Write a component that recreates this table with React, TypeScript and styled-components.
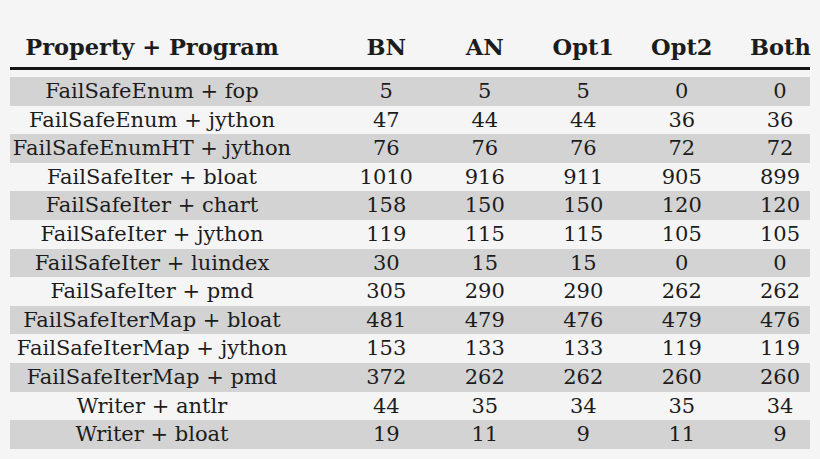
import React from "react";
import styled, { createGlobalStyle } from "styled-components";

const GlobalStyle = createGlobalStyle`
  html, body { margin: 0; padding: 0; background: #f5f5f5; }
  body { font-family: "DejaVu Serif", serif; color: #1c1c1c; }
`;

const Table = styled.div`
  width: 800px;
  margin: 0 10px;
  padding-top: 33px;
`;

const Row = styled.div<{ $shaded?: boolean; $header?: boolean }>`
  display: flex;
  height: ${(p) => (p.$header ? "29px" : "28.6px")};
  line-height: ${(p) => (p.$header ? "29px" : "28.6px")};
  font-size: ${(p) => (p.$header ? "22.5px" : "21px")};
  font-weight: ${(p) => (p.$header ? 700 : 400)};
  background: ${(p) => (p.$shaded ? "#d3d3d3" : "transparent")};
  white-space: nowrap;
`;

const Cell = styled.div<{ $kind: "label" | "num" | "last" }>`
  text-align: center;
  box-sizing: border-box;
  width: ${(p) => (p.$kind === "label" ? "327px" : p.$kind === "last" ? "79px" : "98.5px")};
  padding-right: ${(p) => (p.$kind === "label" ? "43px" : "0")};
  padding-left: ${(p) => (p.$kind === "last" ? "19px" : "0")};
`;

const Rule = styled.div`
  height: 3px;
  background: #151515;
  margin: 5px 0 7px;
`;

const headers = ["Property + Program", "BN", "AN", "Opt1", "Opt2", "Both"];

const data: [string, number, number, number, number, number][] = [
  ["FailSafeEnum + fop", 5, 5, 5, 0, 0],
  ["FailSafeEnum + jython", 47, 44, 44, 36, 36],
  ["FailSafeEnumHT + jython", 76, 76, 76, 72, 72],
  ["FailSafeIter + bloat", 1010, 916, 911, 905, 899],
  ["FailSafeIter + chart", 158, 150, 150, 120, 120],
  ["FailSafeIter + jython", 119, 115, 115, 105, 105],
  ["FailSafeIter + luindex", 30, 15, 15, 0, 0],
  ["FailSafeIter + pmd", 305, 290, 290, 262, 262],
  ["FailSafeIterMap + bloat", 481, 479, 476, 479, 476],
  ["FailSafeIterMap + jython", 153, 133, 133, 119, 119],
  ["FailSafeIterMap + pmd", 372, 262, 262, 260, 260],
  ["Writer + antlr", 44, 35, 34, 35, 34],
  ["Writer + bloat", 19, 11, 9, 11, 9],
];

const kindFor = (i: number): "label" | "num" | "last" =>
  i === 0 ? "label" : i === 5 ? "last" : "num";

export default function App() {
  return (
    <>
      <GlobalStyle />
      <Table>
        <Row $header>
          {headers.map((h, i) => (
            <Cell key={h} $kind={kindFor(i)}>
              {h}
            </Cell>
          ))}
        </Row>
        <Rule />
        {data.map((r, ri) => (
          <Row key={r[0]} $shaded={ri % 2 === 0}>
            {r.map((v, i) => (
              <Cell key={i} $kind={kindFor(i)}>
                {v}
              </Cell>
            ))}
          </Row>
        ))}
      </Table>
    </>
  );
}
